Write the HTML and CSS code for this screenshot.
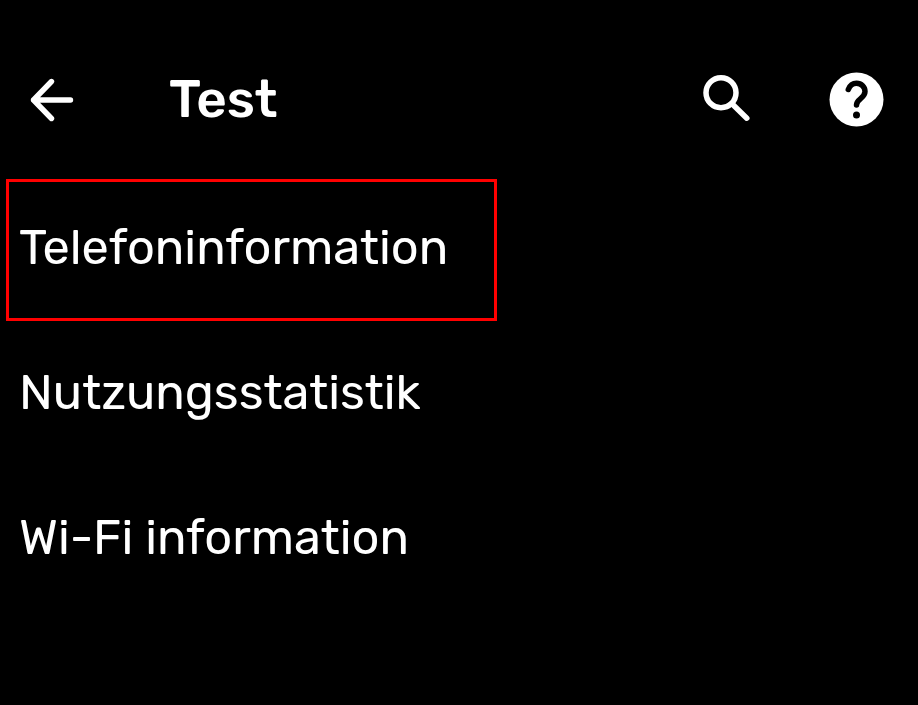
FILE: index.html
```html
<!DOCTYPE html>
<html lang="de">
<head>
    <meta charset="UTF-8">
    <meta name="viewport" content="width=device-width, initial-scale=1.0">
    <title>Test</title>
    <link rel="stylesheet" href="styles.css">
</head>
<body>

    <!-- Kopfzeile -->
    <header class="top-bar">
        <svg class="icon-back" viewBox="0 0 48 48">
            <path d="M6.500 24H43.500M24.500 5.500L6.500 24L24.500 42.500"/>
        </svg>
        <h1>Test</h1>
        <svg class="icon-search" viewBox="0 0 54 54">
            <circle cx="21" cy="19.700" r="15"/>
            <path d="M32 30.700L46.800 45.200"/>
        </svg>
        <svg class="icon-help" viewBox="0 0 55 55">
            <circle class="disc" cx="27.500" cy="27.500" r="27"/>
            <path d="M19.300 17.500C21 13.200 23.500 11.300 27.500 11.300C32.500 11.300 36 15 36 19.500C36 26.500 27.500 26.500 27.500 33"/>
            <circle class="dot" cx="27.500" cy="43" r="3.500"/>
        </svg>
    </header>

    <!-- Menü -->
    <ul class="menu">
        <li class="marked">Telefoninformation</li>
        <li>Nutzungsstatistik</li>
        <li>Wi-Fi information</li>
    </ul>

</body>
</html>
```
FILE: styles.css
```css
* {
    margin: 0;
    padding: 0;
    box-sizing: border-box;
}

body {
    font-family: Rubik, Roboto, sans-serif;
    background-color: #000;
    color: #fff;
    height: 100vh;
    overflow: hidden;
}

svg {
    display: block;
    fill: none;
    stroke: #fff;
    stroke-linecap: round;
    stroke-linejoin: round;
    flex: none;
}

.top-bar {
    display: flex;
    align-items: center;
    height: 179px;
    padding: 20px 34px 0 27px;
}

.icon-back {
    width: 48px;
    height: 48px;
    margin-top: 1px;
    stroke-width: 5.4;
}

h1 {
    font-size: 53px;
    font-weight: 500;
    line-height: 60px;
    margin: 0 auto 2px 94px;
}

.icon-search {
    width: 54px;
    height: 54px;
    margin-right: 75px;
    stroke-width: 5.5;
}

.icon-help {
    width: 55px;
    height: 55px;
}

.icon-help path {
    stroke: #000;
    stroke-width: 5.5;
}

.icon-help .disc {
    fill: #fff;
    stroke: none;
}

.icon-help .dot {
    fill: #000;
    stroke: none;
}

.menu {
    list-style: none;
    padding-left: 6px;
}

.menu li {
    display: flex;
    align-items: center;
    width: 491px;
    height: 142px;
    margin-bottom: 3px;
    padding: 0 0 6px 10px;
    border: 3px solid transparent;
    font-size: 48.7px;
    line-height: 58px;
    white-space: nowrap;
}

.menu .marked {
    border-color: #f00;
}
```
